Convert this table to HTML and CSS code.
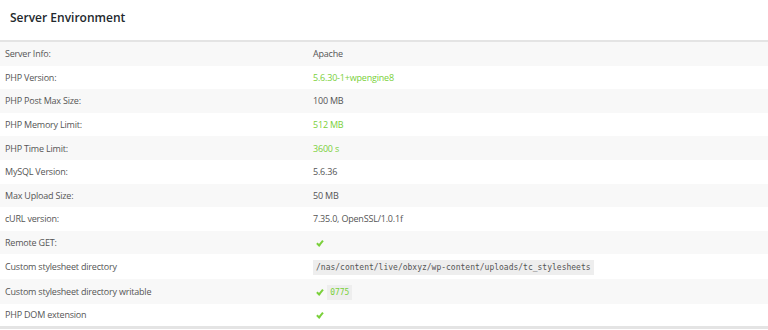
FILE: index.html
```html
<!DOCTYPE html>
<html lang="en">
<head>
    <meta charset="UTF-8">
    <title>Server Environment</title>
    <link rel="stylesheet" href="styles.css">
</head>
<body>
    <div class="panel">
        <div class="panel-header">
            <h3>Server Environment</h3>
        </div>
        <table class="env-table">
            <tr><td>Server Info:</td><td>Apache</td></tr>
            <tr><td>PHP Version:</td><td class="ok">5.6.30-1+wpengine8</td></tr>
            <tr><td>PHP Post Max Size:</td><td>100 MB</td></tr>
            <tr><td>PHP Memory Limit:</td><td class="ok">512 MB</td></tr>
            <tr><td>PHP Time Limit:</td><td class="ok">3600 s</td></tr>
            <tr><td>MySQL Version:</td><td>5.6.36</td></tr>
            <tr><td>Max Upload Size:</td><td>50 MB</td></tr>
            <tr><td>cURL version:</td><td>7.35.0, OpenSSL/1.0.1f</td></tr>
            <tr><td>Remote GET:</td><td><span class="check"></span></td></tr>
            <tr class="code-row"><td>Custom stylesheet directory</td><td><code>/nas/content/live/obxyz/wp-content/uploads/tc_stylesheets</code></td></tr>
            <tr class="code-row"><td>Custom stylesheet directory writable</td><td><span class="check"></span> <code class="ok">0775</code></td></tr>
            <tr><td>PHP DOM extension</td><td><span class="check"></span></td></tr>
        </table>
    </div>
</body>
</html>
```

FILE: styles.css
```css
* {
    margin: 0;
    padding: 0;
    box-sizing: border-box;
}

body {
    background-color: #fff;
    font-family: 'Open Sans', sans-serif;
    color: #555;
}

.panel {
    width: 768px;
}

.panel-header {
    height: 42px;
    padding: 0 10px;
    display: flex;
    align-items: center;
    border-bottom: 2px solid #e4e4e4;
}

.panel-header h3 {
    font-size: 12px;
    font-weight: 600;
    color: #23282d;
    margin-top: -5px;
}

.env-table {
    width: 100%;
    border-collapse: collapse;
    border-bottom: 3px solid #e4e4e4;
}

.env-table td {
    height: 23.6px;
    padding: 0 5px;
    font-size: 9px;
    letter-spacing: -0.2px;
    vertical-align: middle;
}

.env-table td:first-child {
    width: 308px;
}

.env-table tr:nth-child(odd) {
    background-color: #f8f8f8;
}

.env-table tr.code-row td {
    height: 24.6px;
}

.ok {
    color: #7ad03a;
}

.check {
    display: inline-block;
    width: 7px;
    height: 4px;
    margin-left: 5px;
    border-left: 2px solid #7ad03a;
    border-bottom: 2px solid #7ad03a;
    transform: rotate(-50deg) translateY(-2px);
}

code {
    font-family: 'DejaVu Sans Mono', monospace;
    font-size: 8px;
    letter-spacing: 0;
    background-color: #eee;
    padding: 3px 3px;
    color: #555;
}

code.ok {
    color: #7ad03a;
}
```
